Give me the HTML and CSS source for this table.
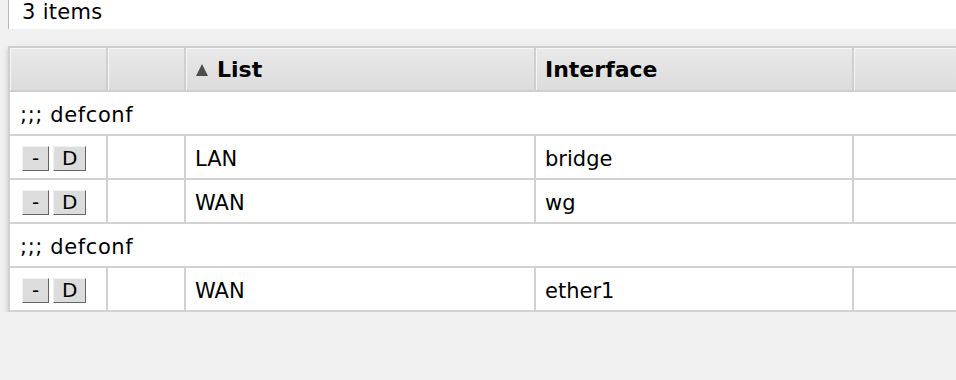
FILE: index.html
```html
<!DOCTYPE html>
<html>
<head>
<meta charset="utf-8">
<link rel="stylesheet" href="styles.css">
</head>
<body>
<div class="status">3 items</div>
<div class="gridwrap">
<table class="grid">
  <colgroup>
    <col class="c-btn"><col class="c-flag"><col class="c-list"><col class="c-iface"><col class="c-rest">
  </colgroup>
  <thead>
    <tr>
      <th></th><th></th>
      <th><span class="sort"></span>List</th>
      <th>Interface</th>
      <th></th>
    </tr>
  </thead>
  <tbody>
    <tr class="comment"><td colspan="5">;;; defconf</td></tr>
    <tr>
      <td class="btns"><span class="btn">-</span><span class="btn">D</span></td>
      <td></td><td>LAN</td><td>bridge</td><td></td>
    </tr>
    <tr>
      <td class="btns"><span class="btn">-</span><span class="btn">D</span></td>
      <td></td><td>WAN</td><td>wg</td><td></td>
    </tr>
    <tr class="comment"><td colspan="5">;;; defconf</td></tr>
    <tr>
      <td class="btns"><span class="btn">-</span><span class="btn">D</span></td>
      <td></td><td>WAN</td><td>ether1</td><td></td>
    </tr>
  </tbody>
</table>
</div>
</body>
</html>
```
FILE: styles.css
```css
html, body {
  margin: 0;
  padding: 0;
  background: #f0f0f0;
  font-family: "DejaVu Sans", Verdana, sans-serif;
  font-size: 21px;
  color: #000;
  overflow: hidden;
}
.status {
  margin-left: 8px;
  height: 29px;
  line-height: 24px;
  padding-left: 13px;
  background: #fff;
  border-left: 1px solid #b8b8b8;
  box-sizing: border-box;
  letter-spacing: 0.3px;
}
.gridwrap {
  margin: 17px 0 0 8px;
  width: 1100px;
  box-shadow: 0 3px 5px rgba(0,0,0,0.2);
}
.grid {
  border-collapse: collapse;
  table-layout: fixed;
  width: 1100px;
  background: #fff;
}
.c-btn { width: 98px; }
.c-flag { width: 78px; }
.c-list { width: 350px; }
.c-iface { width: 318px; }
.grid th, .grid td {
  height: 44px;
  padding: 3px 0 0 9px;
  text-align: left;
  vertical-align: middle;
  border: 2px solid #d2d2d2;
  white-space: nowrap;
  box-sizing: border-box;
}
.grid th {
  padding-top: 1px;
  background: linear-gradient(#e9e9e9, #dcdcdc);
  font-weight: bold;
  font-size: 22px;
  border-color: #cfcfcf;
  box-shadow: inset 1px 1px 0 #f6f6f6;
}
.comment td { padding-left: 10px; letter-spacing: 0.6px; }
.sort {
  display: inline-block;
  width: 0;
  height: 0;
  border-left: 6px solid transparent;
  border-right: 6px solid transparent;
  border-bottom: 12px solid #4d4d4d;
  margin: 0 9px 2px 1px;
  vertical-align: middle;
}
.btns { padding: 2px 0 0 12px !important; }
.btn {
  display: inline-block;
  height: 25px;
  line-height: 23px;
  padding: 0 8px;
  min-width: 27px;
  text-align: center;
  font-size: 20px;
  background: #dcdcdc;
  border: 1px solid;
  border-color: #f2f2f2 #666 #666 #f2f2f2;
  box-sizing: border-box;
  vertical-align: middle;
  margin-right: 4px;
}
```
